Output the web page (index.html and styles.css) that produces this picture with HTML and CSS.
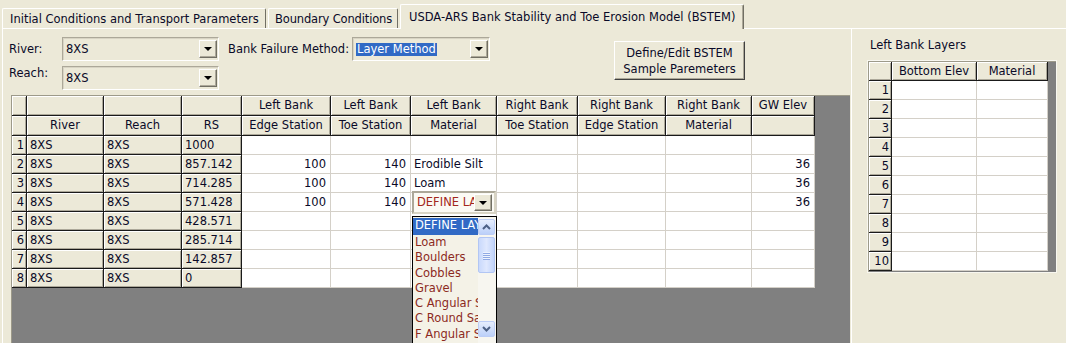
FILE: index.html
```html
<!DOCTYPE html>
<html lang="en">
<head>
    <meta charset="UTF-8">
    <title>BSTEM</title>
    <link rel="stylesheet" href="styles.css">
</head>
<body>

<div class="tabs">
    <div class="tab tab-initial">Initial Conditions and Transport Parameters</div>
    <div class="tab tab-boundary">Boundary Conditions</div>
    <div class="tab tab-bstem active">USDA-ARS Bank Stability and Toe Erosion Model (BSTEM)</div>
</div>

<div class="page">
    <div class="main">
        <div class="controls">
            <div class="lbl lbl-river">River:</div>
            <div class="combo combo-river"><span class="combo-text">8XS</span><span class="arrow-btn"></span></div>
            <div class="lbl lbl-bank">Bank Failure Method:</div>
            <div class="combo combo-bank"><span class="combo-text"><span class="sel">Layer Method</span></span><span class="arrow-btn"></span></div>
            <button class="btn-define">Define/Edit BSTEM<br>Sample Paremeters</button>
            <div class="lbl lbl-reach">Reach:</div>
            <div class="combo combo-reach"><span class="combo-text">8XS</span><span class="arrow-btn"></span></div>
        </div>

        <div class="grid-wrap">
            <table class="grid">
                <colgroup>
                    <col style="width:15px"><col style="width:77px"><col style="width:78px"><col style="width:60px">
                    <col style="width:89px"><col style="width:80px"><col style="width:86px"><col style="width:81px">
                    <col style="width:88px"><col style="width:86px"><col style="width:63px">
                </colgroup>
                <tr class="head">
                    <td class="hd"></td><td class="hd"></td><td class="hd"></td><td class="hd"></td>
                    <td class="hd">Left Bank</td><td class="hd">Left Bank</td><td class="hd">Left Bank</td>
                    <td class="hd">Right Bank</td><td class="hd">Right Bank</td><td class="hd">Right Bank</td>
                    <td class="hd">GW Elev</td>
                </tr>
                <tr class="head">
                    <td class="hd"></td><td class="hd">River</td><td class="hd">Reach</td><td class="hd">RS</td>
                    <td class="hd">Edge Station</td><td class="hd">Toe Station</td><td class="hd">Material</td>
                    <td class="hd">Toe Station</td><td class="hd">Edge Station</td><td class="hd">Material</td>
                    <td class="hd"></td>
                </tr>
                <tr><td class="hd num">1</td><td class="hd txt">8XS</td><td class="hd txt">8XS</td><td class="hd txt">1000</td><td></td><td></td><td></td><td></td><td></td><td></td><td></td></tr>
                <tr><td class="hd num">2</td><td class="hd txt">8XS</td><td class="hd txt">8XS</td><td class="hd txt">857.142</td><td class="r">100</td><td class="r">140</td><td>Erodible Silt</td><td></td><td></td><td></td><td class="r">36</td></tr>
                <tr><td class="hd num">3</td><td class="hd txt">8XS</td><td class="hd txt">8XS</td><td class="hd txt">714.285</td><td class="r">100</td><td class="r">140</td><td>Loam</td><td></td><td></td><td></td><td class="r">36</td></tr>
                <tr><td class="hd num">4</td><td class="hd txt">8XS</td><td class="hd txt">8XS</td><td class="hd txt">571.428</td><td class="r">100</td><td class="r">140</td><td></td><td></td><td></td><td></td><td class="r">36</td></tr>
                <tr><td class="hd num">5</td><td class="hd txt">8XS</td><td class="hd txt">8XS</td><td class="hd txt">428.571</td><td></td><td></td><td></td><td></td><td></td><td></td><td></td></tr>
                <tr><td class="hd num">6</td><td class="hd txt">8XS</td><td class="hd txt">8XS</td><td class="hd txt">285.714</td><td></td><td></td><td></td><td></td><td></td><td></td><td></td></tr>
                <tr><td class="hd num">7</td><td class="hd txt">8XS</td><td class="hd txt">8XS</td><td class="hd txt">142.857</td><td></td><td></td><td></td><td></td><td></td><td></td><td></td></tr>
                <tr><td class="hd num">8</td><td class="hd txt">8XS</td><td class="hd txt">8XS</td><td class="hd txt">0</td><td></td><td></td><td></td><td></td><td></td><td></td><td></td></tr>
            </table>

            <!-- cell editor + open dropdown -->
            <div class="cell-combo"><span class="cell-combo-text">DEFINE LAYER</span><span class="arrow-btn"></span></div>
            <div class="drop-list">
                <div class="drop-items">
                    <div class="item selected">DEFINE LAYER</div>
                    <div class="item">Loam</div>
                    <div class="item">Boulders</div>
                    <div class="item">Cobbles</div>
                    <div class="item">Gravel</div>
                    <div class="item">C Angular Sand</div>
                    <div class="item">C Round Sand</div>
                    <div class="item">F Angular Sand</div>
                </div>
                <div class="vscroll">
                    <div class="sb-btn">
                        <svg width="9" height="6" viewBox="0 0 9 6"><path d="M1 5 L4.5 1.5 L8 5" fill="none" stroke="#4d6185" stroke-width="2"/></svg>
                    </div>
                    <div class="sb-thumb"><span></span><span></span><span></span><span></span></div>
                    <div class="sb-space"></div>
                    <div class="sb-btn">
                        <svg width="9" height="6" viewBox="0 0 9 6"><path d="M1 1 L4.5 4.5 L8 1" fill="none" stroke="#4d6185" stroke-width="2"/></svg>
                    </div>
                </div>
            </div>
        </div>
    </div>

    <div class="side">
        <div class="side-title">Left Bank Layers</div>
        <div class="layers-wrap">
            <table class="grid layers">
                <colgroup><col style="width:23px"><col style="width:85px"><col style="width:71px"></colgroup>
                <tr class="head"><td class="hd"></td><td class="hd">Bottom Elev</td><td class="hd">Material</td></tr>
                <tr><td class="hd num">1</td><td></td><td></td></tr>
                <tr><td class="hd num">2</td><td></td><td></td></tr>
                <tr><td class="hd num">3</td><td></td><td></td></tr>
                <tr><td class="hd num">4</td><td></td><td></td></tr>
                <tr><td class="hd num">5</td><td></td><td></td></tr>
                <tr><td class="hd num">6</td><td></td><td></td></tr>
                <tr><td class="hd num">7</td><td></td><td></td></tr>
                <tr><td class="hd num">8</td><td></td><td></td></tr>
                <tr><td class="hd num">9</td><td></td><td></td></tr>
                <tr><td class="hd num">10</td><td></td><td></td></tr>
            </table>
        </div>
    </div>
</div>

</body>
</html>
```

FILE: styles.css
```css
/* Base */
:root {
    --face: #ece9d8;
    --shadow: #aca899;
    --dark: #716f64;
    --text: #0a0a28;
    --grid-line: #d4d0c8;
    --select: #316ac5;
    --material: #8c2a1e;
}

body {
    margin: 0;
    width: 1066px;
    height: 343px;
    overflow: hidden;
    background-color: var(--face);
    color: var(--text);
    font-family: "DejaVu Sans", sans-serif;
    font-size: 11.5px;
    line-height: 13px;
}

/* Tabs */
.tabs {
    display: flex;
    align-items: flex-end;
    gap: 2px;
    height: 28px;
    padding-left: 2px;
}

.tab {
    box-sizing: border-box;
    height: 20px;
    padding: 4px 0 0 7px;
    border: 1px solid #fff;
    border-right-color: var(--dark);
    border-bottom: none;
    border-radius: 2px 2px 0 0;
    white-space: nowrap;
    overflow: hidden;
}

.tab-initial { width: 264px; }

.tab-boundary {
    width: 130px;
    padding-left: 6px;
    letter-spacing: -0.15px;
}

.tab.active {
    width: 344px;
    height: 25px;
    padding: 6px 0 0 8px;
    margin-bottom: -1px;
    position: relative;
    z-index: 1;
    background-color: var(--face);
    box-shadow: inset -1px 0 0 var(--shadow);
}

/* Tab page */
.page {
    display: flex;
    height: 314px;
    margin-left: 2px;
    border-top: 1px solid #fff;
    border-left: 1px solid #fff;
}

.main {
    width: 848px;
    flex-shrink: 0;
}

/* Top controls */
.controls {
    display: grid;
    grid-template-columns: 53px 157px 9px 124px 138px 124px 131px;
    grid-template-rows: 24px 24px;
    row-gap: 5px;
    padding: 8px 0 0 6px;
}

.lbl {
    white-space: nowrap;
    padding-top: 6px;
}

.lbl-river { grid-column: 1; grid-row: 1; }
.lbl-reach { grid-column: 1; grid-row: 2; padding-top: 1px; }
.lbl-bank { grid-column: 4; grid-row: 1; }
.combo-river { grid-column: 2; grid-row: 1; }
.combo-reach { grid-column: 2; grid-row: 2; }
.combo-bank { grid-column: 5; grid-row: 1; }

.combo {
    display: flex;
    align-items: center;
    box-sizing: border-box;
    height: 24px;
    border: 1px solid #fff;
    border-top-color: var(--shadow);
    border-left-color: var(--shadow);
    box-shadow: inset 1px 1px 0 #d8d4c4;
    padding: 0 1px 0 3px;
}

.combo-text {
    flex: 1;
    white-space: nowrap;
    overflow: hidden;
}

.sel {
    background-color: var(--select);
    color: #fff;
    padding: 1px;
}

.arrow-btn {
    position: relative;
    box-sizing: border-box;
    width: 18px;
    height: 18px;
    border: 1px solid #fff;
    border-right-color: var(--dark);
    border-bottom-color: var(--dark);
    box-shadow: inset -1px -1px 0 var(--shadow);
    background-color: var(--face);
}

.arrow-btn::after {
    content: "";
    position: absolute;
    left: 4px;
    top: 6px;
    border-left: 4px solid transparent;
    border-right: 4px solid transparent;
    border-top: 4px solid #000;
}

.btn-define {
    grid-column: 7;
    grid-row: 1 / span 2;
    align-self: start;
    margin-top: 4px;
    height: 39px;
    padding: 0;
    font: inherit;
    line-height: 16px;
    color: var(--text);
    background-color: var(--face);
    border: 1px solid #fff;
    border-right-color: #404040;
    border-bottom-color: #404040;
    box-shadow: inset -1px -1px 0 var(--shadow);
}

/* Spreadsheet grid */
.grid-wrap {
    position: relative;
    width: 838px;
    height: 247px;
    margin: 5px 0 0 8px;
    background-color: #808080;
    border-top: 1px solid #9d9a8a;
    border-left: 1px solid #9d9a8a;
}

.grid {
    border-collapse: separate;
    border-spacing: 0;
    table-layout: fixed;
    background-color: #fff;
}

.grid td {
    box-sizing: border-box;
    height: 19px;
    padding: 0 3px;
    border-right: 1px solid var(--grid-line);
    border-bottom: 1px solid var(--grid-line);
    white-space: nowrap;
    overflow: hidden;
}

.grid .head td { height: 20px; }

.grid td.hd {
    background-color: var(--face);
    border-right-color: #1a1a1a;
    border-bottom-color: #1a1a1a;
    box-shadow: inset 1px 1px 0 #fff, inset -1px -1px 0 var(--shadow);
    text-align: center;
}

.grid td.txt { text-align: left; }
.grid td.num { text-align: right; padding-right: 2px; }
.grid td.r { text-align: right; padding-right: 4px; }

/* cell editor */
.cell-combo {
    position: absolute;
    left: 400px;
    top: 95px;
    width: 84px;
    height: 23px;
    box-sizing: border-box;
    display: flex;
    align-items: center;
    padding: 0 2px 0 3px;
    background-color: #fbfaf4;
    border: 2px solid var(--shadow);
    border-right-color: #d8d4c4;
    border-bottom-color: #d8d4c4;
    color: #a3281c;
}

.cell-combo-text {
    flex: 1;
    white-space: nowrap;
    overflow: hidden;
}

.cell-combo .arrow-btn {
    width: 18px;
    height: 17px;
}

/* open dropdown */
.drop-list {
    position: absolute;
    left: 400px;
    top: 120px;
    width: 85px;
    height: 140px;
    box-sizing: border-box;
    display: flex;
    border: 1px solid #000;
    background-color: #f4f2e7;
    color: var(--material);
}

.drop-items {
    flex: 1;
    overflow: hidden;
    padding-top: 1px;
}

.item {
    height: 15.3px;
    line-height: 15px;
    padding-left: 2px;
    white-space: nowrap;
}

.item.selected {
    height: 17px;
    line-height: 15px;
    background-color: var(--select);
    color: #fff;
}

.vscroll {
    width: 17px;
    display: flex;
    flex-direction: column;
    padding: 2px 1px 0 0;
    background-color: #f7f6f0;
}

.sb-btn {
    height: 16px;
    box-sizing: border-box;
    display: flex;
    align-items: center;
    justify-content: center;
    border: 1px solid #bccdf6;
    border-radius: 2px;
    background: linear-gradient(#e6eefd, #bcd0f9);
}

.sb-thumb {
    height: 36px;
    margin-top: 2px;
    box-sizing: border-box;
    display: flex;
    flex-direction: column;
    align-items: center;
    justify-content: center;
    gap: 1px;
    border: 1px solid #b2c6f4;
    border-radius: 2px;
    background: linear-gradient(90deg, #c9d9fc, #dfe8fe 50%, #c2d4fa);
}

.sb-thumb span {
    width: 7px;
    height: 1px;
    background-color: #eef3fe;
    box-shadow: 0 1px 0 #90a9e4;
}

.sb-space {
    flex: 1;
    max-height: 48px;
}

/* Right panel */
.side {
    flex: 1;
    padding: 10px 0 0 16px;
    border-left: 1px solid #fff;
}

.side-title {
    padding-left: 2px;
    white-space: nowrap;
}

.layers-wrap {
    width: 187px;
    height: 210px;
    margin-top: 9px;
    background-color: #808080;
    border-top: 1px solid #9d9a8a;
    border-left: 1px solid #9d9a8a;
    outline: 1px solid #f8f7f0;
}

.layers td.hd { text-align: center; }
.layers .head td { height: 19px; }
.layers td.num { text-align: right; padding-right: 2px; }
```
